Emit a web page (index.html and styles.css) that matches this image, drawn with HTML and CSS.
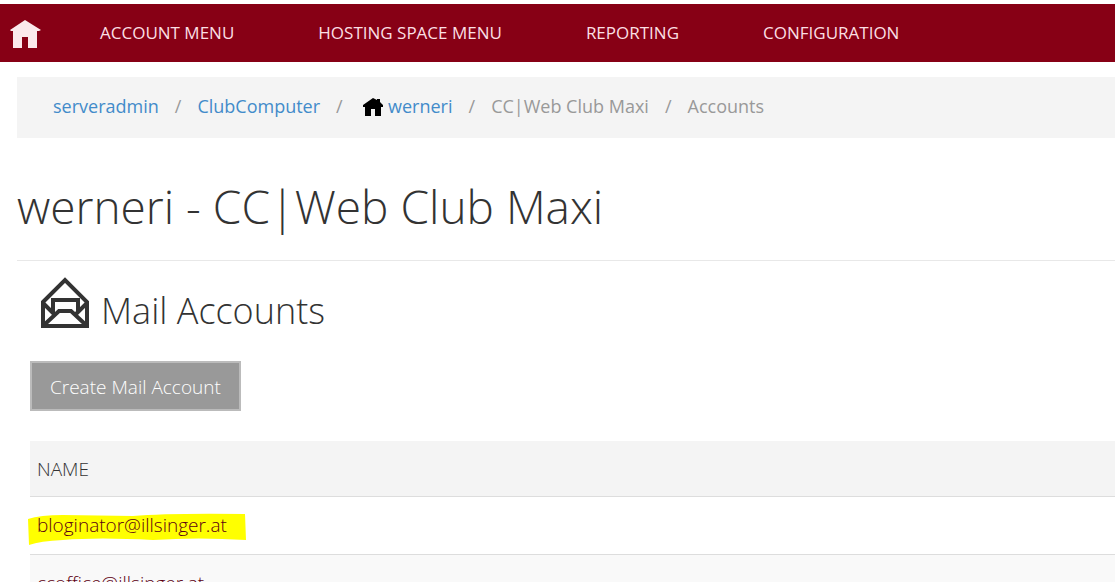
FILE: index.html
```html
<!DOCTYPE html>
<html lang="en">
<head>
  <meta charset="UTF-8">
  <meta name="viewport" content="width=device-width, initial-scale=1.0">
  <title>Mail Accounts</title>
  <link rel="stylesheet" href="styles.css">
</head>
<body>
  <nav class="topmenu">
    <a class="home" href="#" aria-label="Home">
      <svg width="32" height="30" viewBox="0 0 32 30">
        <path d="M15 2 L31 12 L29 13 H27 V30 H18 V19 H12 V30 H3 V13 H1 L0 12 Z"/>
      </svg>
    </a>
    <a href="#">ACCOUNT MENU</a>
    <a href="#">HOSTING SPACE MENU</a>
    <a href="#">REPORTING</a>
    <a href="#">CONFIGURATION</a>
  </nav>

  <main class="content">
    <ol class="breadcrumb">
      <li><a href="#">serveradmin</a></li>
      <li><a href="#">ClubComputer</a></li>
      <li>
        <svg class="space-icon" width="20" height="18" viewBox="0 0 20 18">
          <path d="M10 0 L14 2 V1 H17 V4 L20 7 V9 H18 V18 H12 V11 H8 V18 H2 V9 H0 V7 Z"/>
        </svg>
        <a href="#">werneri</a>
      </li>
      <li>CC|Web Club Maxi</li>
      <li>Accounts</li>
    </ol>

    <h1>werneri - CC|Web Club Maxi</h1>

    <section class="accounts">
      <h2>
        <svg class="mail-icon" width="48" height="52" viewBox="0 0 48 52">
          <path d="M2 25 L24 3 L46 25 V49 H2 Z"/>
          <path d="M12 36 V23 H37 V36"/>
          <path d="M2 26 L14 38 M46 26 L34 38"/>
          <path d="M3 48 L18 34 H30 L45 48"/>
        </svg>
        <span>Mail Accounts</span>
      </h2>
      <button type="button" class="create">Create Mail Account</button>

      <table>
        <thead>
          <tr><th>NAME</th></tr>
        </thead>
        <tbody>
          <tr>
            <td>
              <a class="marked" href="#">
                <svg class="marker" width="218" height="32" viewBox="0 0 218 32">
                  <path d="M0 6 Q12 2 35 2 L105 3 Q140 0 217 1 L218 27 Q170 24 125 27 Q70 24 35 27 Q12 28 1 32 Z"/>
                </svg>
                <span>bloginator@illsinger.at</span>
              </a>
            </td>
          </tr>
          <tr><td><a href="#">ccoffice@illsinger.at</a></td></tr>
        </tbody>
      </table>
    </section>
  </main>
</body>
</html>
```

FILE: styles.css
```css
body {
  margin: 0;
  padding-top: 4px;
  font-family: 'Open Sans', 'Noto Sans', sans-serif;
  font-size: 18px;
  line-height: 24px;
  color: #333333;
  background-color: #ffffff;
}

a {
  text-decoration: none;
}

/* Top menu */
.topmenu {
  display: flex;
  align-items: center;
  gap: 84px;
  height: 58px;
  padding-left: 10px;
  background-color: #870015;
  font-size: 17px;
  white-space: nowrap;
}

.topmenu a {
  color: #fbdfe3;
}

.topmenu .home {
  height: 30px;
  margin-right: -26px;
}

.home svg {
  fill: #fbe9ec;
}

.content {
  padding: 15px 0 0 17px;
}

/* Breadcrumb */
.breadcrumb {
  display: flex;
  margin: 0;
  padding: 17px 36px 20px;
  list-style: none;
  background-color: #f4f4f4;
  color: #999999;
  white-space: nowrap;
}

.breadcrumb li + li::before {
  content: "/";
  padding: 0 16px;
}

.breadcrumb a {
  color: #428bca;
}

.space-icon {
  vertical-align: -3px;
}

/* Headings */
h1 {
  margin: 0;
  padding: 32px 0 18px;
  border-bottom: 1px solid #e8e8e8;
  font-size: 46px;
  font-weight: 300;
  line-height: 72px;
}

.accounts {
  padding: 16px 0 0 13px;
}

h2 {
  display: flex;
  align-items: flex-end;
  gap: 12px;
  margin: 0 0 32px 11px;
  font-size: 36px;
  font-weight: 300;
  line-height: 36px;
}

.mail-icon {
  fill: none;
  stroke: #333333;
  stroke-width: 4;
}

.create {
  display: block;
  height: 50px;
  padding: 2px 18px 0;
  border: 2px solid #bbbbbb;
  background-color: #999999;
  color: #ffffff;
  font: 300 19px 'Open Sans', 'Noto Sans', sans-serif;
}

/* Account list */
table {
  width: 100%;
  margin-top: 30px;
  border-collapse: collapse;
  font-size: 19px;
}

th,
td {
  padding: 16px 7px 15px;
  border-bottom: 1px solid #dddddd;
  font-weight: 300;
  text-align: left;
}

th {
  background-color: #f4f4f4;
}

td {
  padding-bottom: 17px;
}

tbody tr:nth-child(even) {
  background-color: #f9f9f9;
}

td a {
  color: #5c0012;
}

/* Highlighter stroke behind the address */
.marked {
  position: relative;
}

.marker {
  position: absolute;
  top: 1px;
  left: -9px;
  fill: #ffff00;
}

.marked span {
  position: relative;
}
```
